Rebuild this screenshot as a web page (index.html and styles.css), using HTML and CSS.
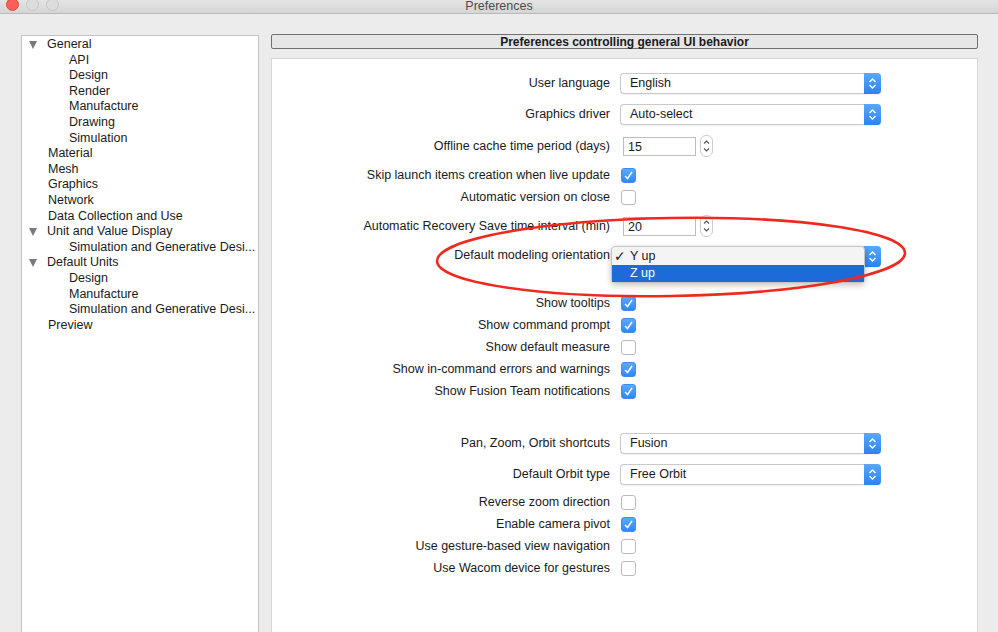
FILE: index.html
```html
<!DOCTYPE html><html lang="en">
<head>
  <meta charset="UTF-8" />
  <title>Preferences</title>
  <link rel="stylesheet" href="styles.css">
</head>
<body>
  <div class="titlebar">
    <div class="lights">
      <span class="light red"></span>
      <span class="light"></span>
      <span class="light"></span>
    </div>
    <div class="title">Preferences</div>
  </div>

  <div class="main">
    <div class="tree">
      <div class="node open"><span class="tri"></span>General</div>
      <div class="node child">API</div>
      <div class="node child">Design</div>
      <div class="node child">Render</div>
      <div class="node child">Manufacture</div>
      <div class="node child">Drawing</div>
      <div class="node child">Simulation</div>
      <div class="node">Material</div>
      <div class="node">Mesh</div>
      <div class="node">Graphics</div>
      <div class="node">Network</div>
      <div class="node">Data Collection and Use</div>
      <div class="node open"><span class="tri"></span>Unit and Value Display</div>
      <div class="node child">Simulation and Generative Desi...</div>
      <div class="node open"><span class="tri"></span>Default Units</div>
      <div class="node child">Design</div>
      <div class="node child">Manufacture</div>
      <div class="node child">Simulation and Generative Desi...</div>
      <div class="node">Preview</div>
    </div>

    <div class="right">
      <div class="header">Preferences controlling general UI behavior</div>
      <div class="panel">

        <div class="row">
          <div class="label">User language</div>
          <div class="select"><span class="sel-text">English</span><span class="sel-cap"><svg width="9" height="13" viewBox="0 0 9 13"><path d="M1.5 5 L4.5 2 L7.5 5 M1.5 8 L4.5 11 L7.5 8" fill="none" stroke="#fff" stroke-width="1.4"/></svg></span></div>
        </div>

        <div class="row sp9">
          <div class="label">Graphics driver</div>
          <div class="select"><span class="sel-text">Auto-select</span><span class="sel-cap"><svg width="9" height="13" viewBox="0 0 9 13"><path d="M1.5 5 L4.5 2 L7.5 5 M1.5 8 L4.5 11 L7.5 8" fill="none" stroke="#fff" stroke-width="1.4"/></svg></span></div>
        </div>

        <div class="row sp10">
          <div class="label">Offline cache time period (days)</div>
          <div class="num">15</div>
          <div class="spin"><svg width="7" height="14" viewBox="0 0 7 14"><path d="M1 4.5 L3.5 2 L6 4.5 M1 9.5 L3.5 12 L6 9.5" fill="none" stroke="#555" stroke-width="1.1"/></svg></div>
        </div>

        <div class="row sp7">
          <div class="label">Skip launch items creation when live update</div>
          <div class="check on"><svg width="11" height="11" viewBox="0 0 11 11"><path d="M2 6 L4.5 8.5 L9 2" fill="none" stroke="#fff" stroke-width="1.5"/></svg></div>
        </div>

        <div class="row">
          <div class="label">Automatic version on close</div>
          <div class="check"></div>
        </div>

        <div class="row sp7">
          <div class="label">Automatic Recovery Save time interval (min)</div>
          <div class="num">20</div>
          <div class="spin"><svg width="7" height="14" viewBox="0 0 7 14"><path d="M1 4.5 L3.5 2 L6 4.5 M1 9.5 L3.5 12 L6 9.5" fill="none" stroke="#555" stroke-width="1.1"/></svg></div>
        </div>

        <div class="row sp7">
          <div class="label">Default modeling orientation</div>
          <div class="select low">
            <span class="sel-text">Y up</span><span class="sel-cap"><svg width="9" height="13" viewBox="0 0 9 13"><path d="M1.5 5 L4.5 2 L7.5 5 M1.5 8 L4.5 11 L7.5 8" fill="none" stroke="#fff" stroke-width="1.4"/></svg></span>
            <div class="popup">
              <div class="opt"><span class="tick">✓</span>Y up</div>
              <div class="opt hl">Z up</div>
            </div>
          </div>
        </div>

        <div class="row sp26">
          <div class="label">Show tooltips</div>
          <div class="check on"><svg width="11" height="11" viewBox="0 0 11 11"><path d="M2 6 L4.5 8.5 L9 2" fill="none" stroke="#fff" stroke-width="1.5"/></svg></div>
        </div>
        <div class="row">
          <div class="label">Show command prompt</div>
          <div class="check on"><svg width="11" height="11" viewBox="0 0 11 11"><path d="M2 6 L4.5 8.5 L9 2" fill="none" stroke="#fff" stroke-width="1.5"/></svg></div>
        </div>
        <div class="row">
          <div class="label">Show default measure</div>
          <div class="check"></div>
        </div>
        <div class="row">
          <div class="label">Show in-command errors and warnings</div>
          <div class="check on"><svg width="11" height="11" viewBox="0 0 11 11"><path d="M2 6 L4.5 8.5 L9 2" fill="none" stroke="#fff" stroke-width="1.5"/></svg></div>
        </div>
        <div class="row">
          <div class="label">Show Fusion Team notifications</div>
          <div class="check on"><svg width="11" height="11" viewBox="0 0 11 11"><path d="M2 6 L4.5 8.5 L9 2" fill="none" stroke="#fff" stroke-width="1.5"/></svg></div>
        </div>

        <div class="row sp30">
          <div class="label">Pan, Zoom, Orbit shortcuts</div>
          <div class="select"><span class="sel-text">Fusion</span><span class="sel-cap"><svg width="9" height="13" viewBox="0 0 9 13"><path d="M1.5 5 L4.5 2 L7.5 5 M1.5 8 L4.5 11 L7.5 8" fill="none" stroke="#fff" stroke-width="1.4"/></svg></span></div>
        </div>
        <div class="row sp9">
          <div class="label">Default Orbit type</div>
          <div class="select"><span class="sel-text">Free Orbit</span><span class="sel-cap"><svg width="9" height="13" viewBox="0 0 9 13"><path d="M1.5 5 L4.5 2 L7.5 5 M1.5 8 L4.5 11 L7.5 8" fill="none" stroke="#fff" stroke-width="1.4"/></svg></span></div>
        </div>

        <div class="row sp6">
          <div class="label">Reverse zoom direction</div>
          <div class="check"></div>
        </div>
        <div class="row">
          <div class="label">Enable camera pivot</div>
          <div class="check on"><svg width="11" height="11" viewBox="0 0 11 11"><path d="M2 6 L4.5 8.5 L9 2" fill="none" stroke="#fff" stroke-width="1.5"/></svg></div>
        </div>
        <div class="row">
          <div class="label">Use gesture-based view navigation</div>
          <div class="check"></div>
        </div>
        <div class="row">
          <div class="label">Use Wacom device for gestures</div>
          <div class="check"></div>
        </div>

      </div>
    </div>
  </div>

  <svg class="annot" width="998" height="632" viewBox="0 0 998 632">
    <ellipse cx="671" cy="257" rx="234" ry="39" transform="rotate(-1 671 257)" fill="none" stroke="#ee2a1e" stroke-width="2.6"/>
  </svg>
</body>
</html>
```

FILE: styles.css
```css
html, body {
  margin: 0;
  height: 100%;
}
body {
  background: #ececec;
  overflow: hidden;
  color: #1a1a1a;
  font-family: "Liberation Sans", Arial, sans-serif;
  font-size: 12.5px;
  display: flex;
  flex-direction: column;
  position: relative;
}
.titlebar {
  height: 13px;
  border-bottom: 1px solid #b9b9b9;
  background: linear-gradient(#e4e4e4, #d5d5d5);
  position: relative;
  flex: none;
}
.lights {
  position: absolute;
  left: 6px;
  top: -2px;
  display: flex;
  gap: 7px;
}
.light {
  width: 11px;
  height: 11px;
  border-radius: 50%;
  background: #dcdcdc;
  border: 1px solid #c6c6c6;
}
.light.red {
  background: #fc5f57;
  border-color: #df4940;
}
.title {
  text-align: center;
  font-size: 12.5px;
  line-height: 13px;
  color: #4b4b4b;
}
.main {
  flex: 1;
  display: flex;
  gap: 12px;
  padding: 20px 20px 0 21px;
  min-height: 0;
}
.tree {
  width: 238px;
  box-sizing: border-box;
  margin-top: 1px;
  background: #fff;
  border: 1px solid #c4c4c4;
  border-bottom: none;
  padding-top: 1px;
}
.node {
  height: 15.6px;
  line-height: 15.6px;
  padding-left: 26px;
  white-space: nowrap;
}
.node.open {
  padding-left: 7px;
}
.node.child {
  padding-left: 47px;
}
.tri {
  display: inline-block;
  width: 0;
  height: 0;
  border-left: 4.5px solid transparent;
  border-right: 4.5px solid transparent;
  border-top: 8px solid #7a7a7a;
  margin-right: 10px;
  vertical-align: -1px;
}
.right {
  flex: 1;
  display: flex;
  flex-direction: column;
}
.header {
  height: 13px;
  border: 1px solid #707070;
  border-radius: 2px;
  background: #e6e6e6;
  text-align: center;
  font-weight: bold;
  font-size: 12px;
  line-height: 14px;
  margin-bottom: 9px;
}
.panel {
  flex: 1;
  background: #fff;
  border: 1px solid #d6d6d6;
  border-bottom: none;
  padding-top: 13px;
}
.row {
  display: flex;
  align-items: center;
  height: 22px;
}
.sp6 { margin-top: 6px; }
.sp7 { margin-top: 7px; }
.sp9 { margin-top: 9px; }
.sp10 { margin-top: 10px; }
.sp26 { margin-top: 26px; }
.sp30 { margin-top: 30px; }
.label {
  width: 338px;
  text-align: right;
  white-space: nowrap;
}
.select {
  margin-left: 10px;
  width: 261px;
  height: 21px;
  box-sizing: border-box;
  border: 1px solid #c9c9c9;
  border-right: none;
  border-radius: 4px;
  display: flex;
  position: relative;
  background: #fff;
  box-shadow: 0 1px 1px rgba(0, 0, 0, 0.06);
}
.select.low {
  margin-top: 3px;
}
.sel-text {
  flex: 1;
  padding-left: 9px;
  line-height: 19px;
}
.sel-cap {
  width: 17px;
  margin: -1px 0;
  border-radius: 0 4px 4px 0;
  background: linear-gradient(#5aa8fb, #2a83f5);
  display: flex;
  align-items: center;
  justify-content: center;
}
.num {
  margin-left: 13px;
  width: 73px;
  height: 19px;
  box-sizing: border-box;
  border: 1px solid #bdbdbd;
  padding-left: 4px;
  line-height: 18px;
  background: #fff;
}
.spin {
  margin-left: 4px;
  width: 13px;
  height: 22px;
  box-sizing: border-box;
  border: 1px solid #cbcbcb;
  border-radius: 6px;
  display: flex;
  align-items: center;
  justify-content: center;
  background: #fff;
}
.check {
  margin-left: 11px;
  width: 15px;
  height: 15px;
  box-sizing: border-box;
  border: 1px solid #bababa;
  border-radius: 3px;
  background: #fff;
  display: flex;
  align-items: center;
  justify-content: center;
}
.check.on {
  border-color: #3c8ef0;
  background: linear-gradient(#5ea9fc, #2d88fa);
}
.popup {
  position: absolute;
  left: -10px;
  top: -1px;
  width: 254px;
  height: 37px;
  box-sizing: border-box;
  border: 1px solid #c5c5c5;
  border-radius: 4px;
  background: #f4f4f4;
  box-shadow: 0 2px 6px rgba(0, 0, 0, 0.25);
  padding-top: 1px;
}
.opt {
  position: relative;
  height: 17px;
  line-height: 17px;
  padding-left: 18px;
}
.opt.hl {
  background: #1d6bd9;
  color: #fff;
}
.tick {
  position: absolute;
  left: 2px;
  top: 0;
  font-family: "DejaVu Sans", sans-serif;
  font-size: 14px;
}
.annot {
  position: absolute;
  left: 0;
  top: 0;
  pointer-events: none;
}
```
